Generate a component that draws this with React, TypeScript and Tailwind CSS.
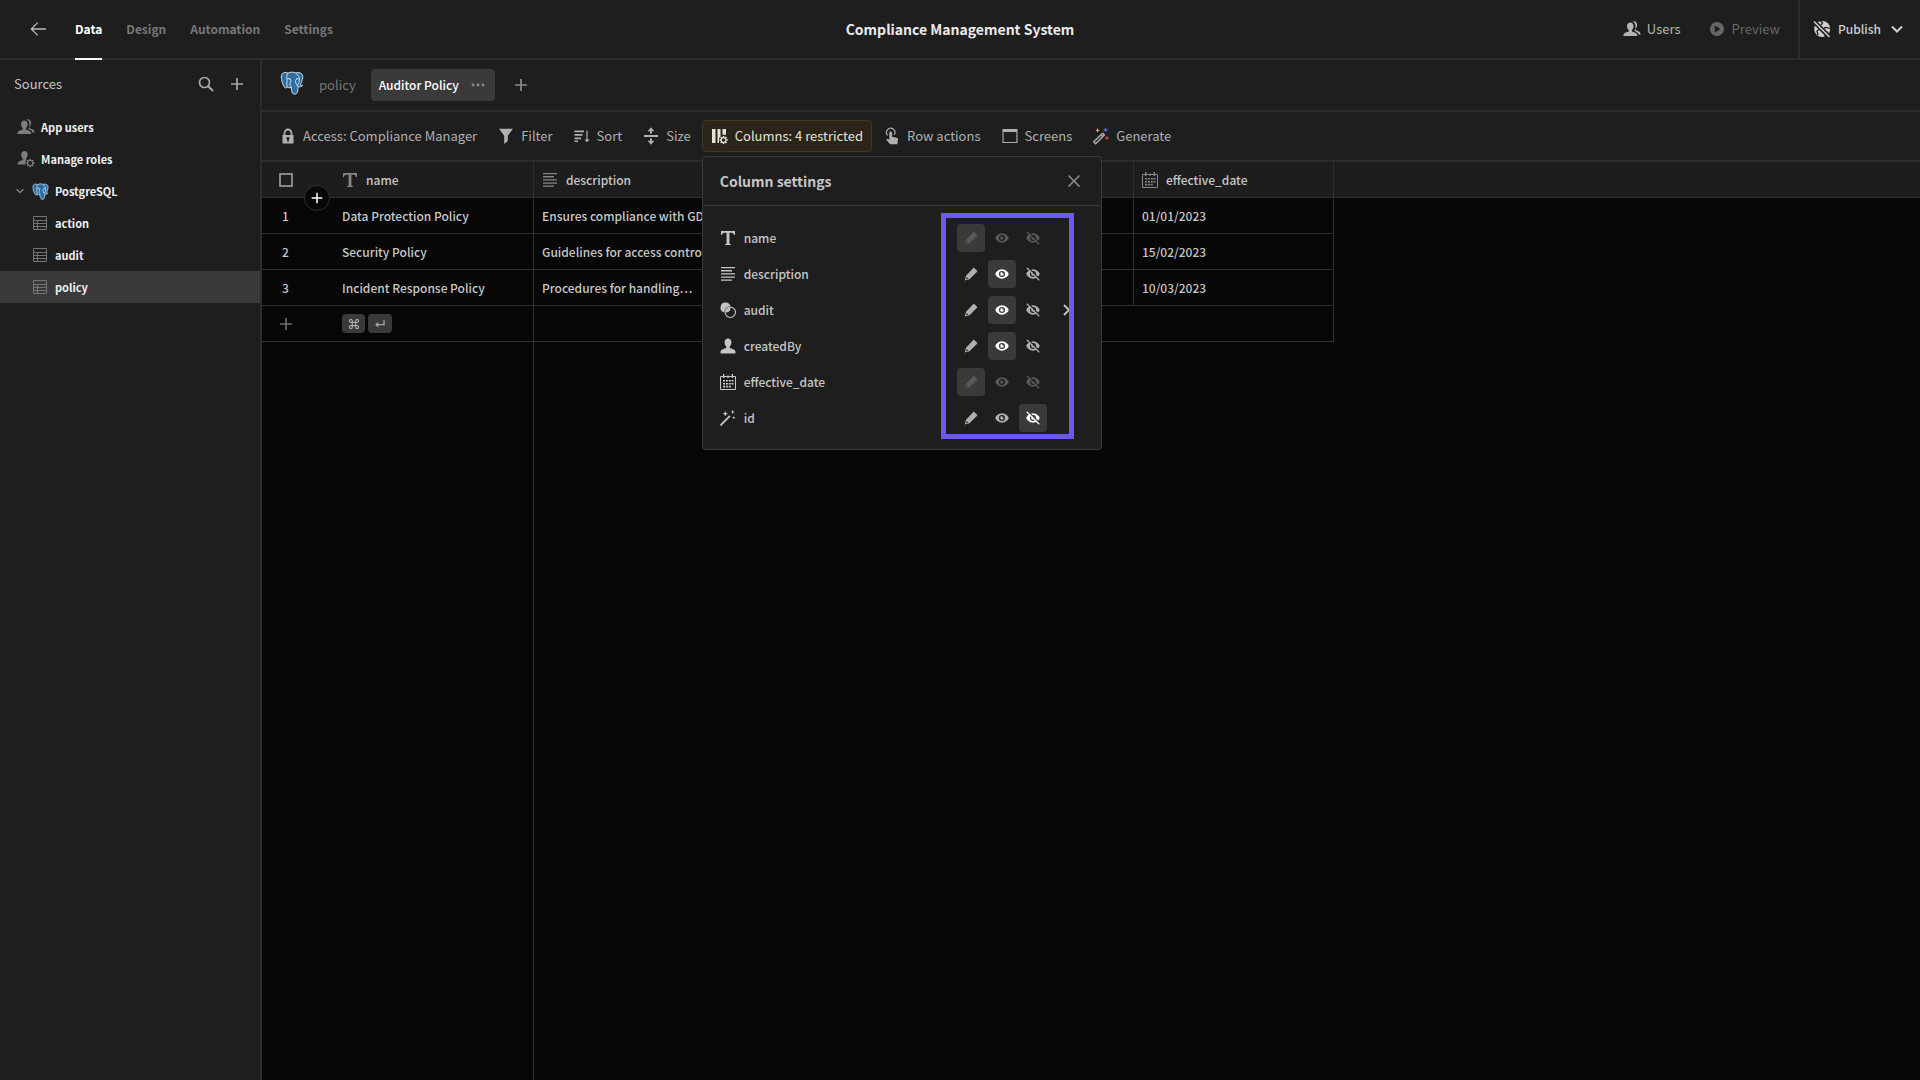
import React from "react";

type IconProps = { className?: string };

function Svg({ className = "size-[18px]", box = 18, children }: { className?: string; box?: number; children: React.ReactNode }) {
  return (
    <svg aria-hidden="true" viewBox={`0 0 ${box} ${box}`} fill="currentColor" className={`shrink-0 ${className}`}>
      {children}
    </svg>
  );
}

const Stroke = ({ d, w = 1.5 }: { d: string; w?: number }) => (
  <path d={d} fill="none" stroke="currentColor" strokeWidth={w} />
);

const ArrowLeft = (p: IconProps) => (
  <Svg {...p}><Stroke d="M17 9H2.300M8.700 2.600L2.300 9l6.400 6.400" w={1.3} /></Svg>
);
const Search = (p: IconProps) => (
  <Svg {...p}><circle cx="7.5" cy="7.5" r="5" fill="none" stroke="currentColor" strokeWidth="1.7" /><Stroke d="M11.2 11.2L16 16" w={2} /></Svg>
);
const Plus = (p: IconProps) => (
  <Svg {...p}><Stroke d="M9 3v12M3 9h12" w={1.7} /></Svg>
);
const UserShape = () => (
  <path d="M9 1.6c2 0 3.4 1.500 3.400 3.900 0 1.700-.7 3.200-1.600 4.100-.3.400-.2 1.500.4 1.700 2.700.8 5.300 1.600 5.300 3.900v1.300H1.500v-1.300c0-2.300 2.600-3.100 5.300-3.900.6-.2.700-1.300.4-1.700C6.300 8.700 5.600 7.200 5.600 5.500 5.600 3.100 7 1.600 9 1.600z" />
);
const User = (p: IconProps) => <Svg {...p}><UserShape /></Svg>;
const Users = (p: IconProps) => (
  <Svg {...p}>
    <path d="M7.300 2.400c1.900 0 3.300 1.400 3.300 3.700 0 1.600-.7 3-1.500 3.900-.4.400-.3 1.400.3 1.700 2.500.7 4.900 1.500 4.900 3.600V16H.4v-.7c0-2.100 2.400-2.900 4.900-3.600.6-.3.7-1.300.3-1.700C4.700 9.100 4 7.700 4 6.100c0-2.300 1.400-3.700 3.300-3.700z" />
    <path d="M10 1.500c2.200-.6 4.100.9 4.100 3.500 0 1.700-.6 2.900-1.400 3.700-.4.500-.3 1.300.3 1.600 2.300.9 4.500 1.500 4.500 3.500v.7h-2c-.4-1.900-2.200-2.800-4.300-3.500.8-1.300 1.300-2.800 1.300-4.600 0-2-.9-3.800-2.500-4.900z" />
  </Svg>
);
const Gear = ({ x, y, r }: { x: number; y: number; r: number }) => (
  <g transform={`translate(${x} ${y})`}>
    <circle r={r} fill="none" stroke="currentColor" strokeWidth="1.3" />
    {[0, 45, 90, 135, 180, 225, 270, 315].map((a) => (
      <path key={a} transform={`rotate(${a})`} d={`M-.7 ${-r - 1.7}h1.400v1.500h-1.400z`} />
    ))}
  </g>
);
const UserGear = (p: IconProps) => (
  <Svg {...p}>
    <path d="M7.500 1c1.900 0 3.200 1.400 3.200 3.600 0 1.500-.5 2.700-1.300 3.600-.4.400-.4 1.300.2 1.600-1.300 1.200-1.500 3-.8 4.700H.7v-.8c0-2 2.200-2.700 4.600-3.500.6-.2.7-1.400.3-1.800-.9-.9-1.400-2.200-1.400-3.700C4.200 2.500 5.600 1 7.500 1z" />
    <Gear x={13.2} y={13} r={2.6} />
  </Svg>
);
const ChevronDown = (p: IconProps) => <Svg {...p}><Stroke d="M4 6.500l5 5 5-5" w={2} /></Svg>;
const ChevronRight = (p: IconProps) => <Svg {...p}><Stroke d="M5 4l5 5-5 5" w={1.8} /></Svg>;
const Close = (p: IconProps) => <Svg {...p}><Stroke d="M3.500 3.500l11 11M14.500 3.500l-11 11" w={1.5} /></Svg>;
const TableIcon = (p: IconProps) => (
  <Svg {...p}>
    <path d="M2.500 2.500h13v13h-13zM2.500 6.500h13M2.500 9.500h13M2.500 12.500h13M6.500 6.500v9" fill="none" stroke="currentColor" strokeWidth="1" />
  </Svg>
);
const Play = (p: IconProps) => (
  <Svg {...p}><path fillRule="evenodd" d="M9 2a7 7 0 100 14A7 7 0 009 2zM6.800 5.400L12.600 9l-5.800 3.600z" /></Svg>
);
const GlobeStrike = (p: IconProps) => (
  <Svg {...p}>
    <mask id="globe-strike">
      <circle cx="9.200" cy="9" r="8" fill="white" />
      <path d="M7 0l2.500 3-1.500 2M17 8.500l-3.500-1-2.500.500M6 9.500L4 11l1 4M13 11l-1.500 3 1 3M3.500 4L2 2" fill="none" stroke="black" strokeWidth="1.300" />
      <path d="M-1 -.5L18 18.500" stroke="black" strokeWidth="4.600" />
    </mask>
    <rect width="18" height="18" mask="url(#globe-strike)" />
    <Stroke d="M1 1.500l15.500 15.500" w={1.6} />
  </Svg>
);
const Lock = (p: IconProps) => (
  <Svg {...p}>
    <path fillRule="evenodd" d="M3.500 8h11v8.500h-11zM9 10a1.500 1.500 0 00-.8 2.800v2h1.600v-2A1.500 1.500 0 009 10z" />
    <Stroke d="M5.500 8V6a3.500 3.500 0 017 0v2" w={1.8} />
  </Svg>
);
const Funnel = (p: IconProps) => <Svg {...p}><path d="M2 1.800h14L10.800 8.700v5.200L7.200 17V8.700z" /></Svg>;
const SortIcon = (p: IconProps) => (
  <Svg {...p}><path d="M1.500 3.500h9.500v1.700H1.500zM1.500 7h8v1.700h-8zM1.500 10.500H8v1.700H1.500zM1.500 13.500H5v1.500H1.500zM13.400 3.500h1.200v9h2L14 15.300l-2.600-2.800h2z" /></Svg>
);
const SizeIcon = (p: IconProps) => (
  <Svg {...p}><path d="M2 8.100h14v1.800H2zM9 .3l3.400 3.900H9.900v2.500H8.100V4.200H5.600zM9 17.700l3.400-3.900H9.900v-2.500H8.100v2.500H5.600z" /></Svg>
);
const ColumnsGear = (p: IconProps) => (
  <Svg {...p}>
    <path d="M1 2h3.500v14H1zM6.500 2h3v7.500l-1.500 2V16H6.500zM11.500 2h3.500v5.800h-3.500z" />
    <Gear x={12.6} y={13} r={2.4} />
  </Svg>
);
const Tap = (p: IconProps) => (
  <Svg {...p}>
    <path d="M7.200 4.500c1-.3 1.900.3 1.900 1.300v4l4.500.9c1 .2 1.500.9 1.400 1.800l-.6 4.700H7.100l-3.900-4.500c.8-1 1.900-.8 3.100.1V5.800c0-.7.300-1.100.9-1.300z" />
    <Stroke d="M4.600 8.400a4.200 4.200 0 116.500-.4" w={1.2} />
  </Svg>
);
const WindowIcon = (p: IconProps) => (
  <Svg {...p}><path fillRule="evenodd" d="M1.500 2h15v14h-15zM2.600 5v9.900h12.800V5z" /></Svg>
);
const WandColor = (p: IconProps) => (
  <Svg {...p}>
    <path d="M10.700 6.200l1.700 1.700-8.800 8.800-2-2zM9.300 8.200l1.200 1.200" fill="none" stroke="currentColor" strokeWidth="1.400" strokeLinejoin="round" />
    <path fill="#e8b13c" d="M5.600 1l.7 1.700 1.700.7-1.700.7-.7 1.700-.7-1.700-1.700-.7 1.700-.7z" />
    <path fill="#5f67e8" d="M13.600.2l.8 1.900 1.900.8-1.900.8-.8 1.900-.8-1.900-1.900-.8 1.900-.8z" />
    <path fill="#e5484d" d="M14.900 8.600l.7 1.800 1.800.7-1.800.7-.7 1.800-.7-1.800-1.800-.7 1.800-.7z" />
  </Svg>
);
const TextType = (p: IconProps) => (
  <Svg {...p}><path d="M2 2h14v4h-1.100c-.2-1.500-.7-2.200-2.200-2.200h-2.300v10.100c0 .8.500 1.200 1.700 1.300v.9H5.900v-.9c1.200-.1 1.700-.5 1.700-1.300V3.800H5.300C3.800 3.800 3.300 4.500 3.100 6H2z" /></Svg>
);
const TextLines = (p: IconProps) => (
  <Svg {...p}><path d="M2 2h14v1.300H2zM2 5.100h11v1.300H2zM2 8.300h14v1.300H2zM2 11.400h14v1.300H2zM2 14.500h11v1.300H2z" /></Svg>
);
const Relation = (p: IconProps) => (
  <Svg {...p}>
    <path d="M6.600 1.500a5.100 5.100 0 014.900 3.700 6 6 0 00-6.300 6.300A5.100 5.100 0 016.600 1.500z" />
    <path d="M11.600 6.800a5 5 0 01-4.800 4.800 5 5 0 014.800-4.800z" />
    <circle cx="11.300" cy="11.300" r="5.200" fill="none" stroke="currentColor" strokeWidth="1.100" />
  </Svg>
);
const Calendar = (p: IconProps) => (
  <Svg {...p}>
    <path d="M1.500 3.500h15v13h-15z" fill="none" stroke="currentColor" strokeWidth="1" />
    <path d="M4 1h1.400v4H4zM12.600 1H14v4h-1.400zM8.300 2.500h1.400V5H8.300z" />
    <path d="M4 7h2v1.600H4zM6.900 7h2v1.600h-2zM9.800 7h2v1.600h-2zM12.500 7h2v1.600h-2zM4 9.900h2v1.600H4zM6.900 9.900h2v1.600h-2zM9.800 9.900h2v1.600h-2zM12.500 9.900h2v1.600h-2zM4 12.800h2v1.600H4zM6.900 12.800h2v1.600h-2zM9.800 12.800h2v1.600h-2z" />
  </Svg>
);
const Wand = (p: IconProps) => (
  <Svg {...p}>
    <path d="M10.300 6.300l1.300 1.300-9.500 9.500L.8 15.800zM6.300 2l.8 2 2 .8-2 .8-.8 2-.8-2-2-.8 2-.8zM13.700.8l.6 1.600 1.600.6-1.600.6-.6 1.600-.6-1.600-1.600-.6 1.600-.6zM14.800 7l.5 1.300 1.300.5-1.300.5-.5 1.300-.5-1.300-1.300-.5 1.300-.5z" />
  </Svg>
);
const Pencil = (p: IconProps) => (
  <Svg {...p}><path fillRule="evenodd" d="M13.200 1.200l3.600 3.600c.4.400.4.800 0 1.200l-9.700 9.700-6.200 1.800 1.700-6.200L12 1.200c.4-.4.800-.4 1.200 0zM3.500 12.800l-.8 2.900 2.900-.9z" /></Svg>
);
const eyePath = "M9 3C4.800 3 .5 7 .5 9S4.800 15 9 15s8.500-4 8.500-6S13.200 3 9 3zm0 9.900a3.900 3.900 0 110-7.800 3.900 3.900 0 010 7.800z";
const pupilPath = "M9.500 6.700a1.300 1.300 0 001.700 1.700A2.300 2.300 0 119.500 6.700z";
const Eye = (p: IconProps) => (
  <Svg {...p}><path fillRule="evenodd" d={eyePath} /><path d={pupilPath} /></Svg>
);
const EyeOff = (p: IconProps) => (
  <Svg {...p}>
    <mask id="eye-strike"><rect width="18" height="18" fill="white" /><path d="M2.800.8L18 16" stroke="black" strokeWidth="1.800" /></mask>
    <g mask="url(#eye-strike)"><path fillRule="evenodd" d={eyePath} /><path d={pupilPath} /></g>
    <Stroke d="M1 1l16 16" w={1.5} />
  </Svg>
);
const Enter = (p: IconProps) => (
  <Svg {...p}><path d="M14 3.500h2V11H6.500v3.300L1.800 10l4.700-4.300V9H14z" /></Svg>
);
const Command = (p: IconProps) => (
  <Svg {...p}><path d="M6.500 6.500h5v5h-5zM6.500 6.500V4.300a2.200 2.200 0 10-2.200 2.200zM11.500 6.500V4.300a2.200 2.200 0 112.200 2.200zM6.500 11.500v2.200a2.200 2.200 0 11-2.200-2.200zM11.500 11.500v2.200a2.200 2.200 0 102.200-2.200z" fill="none" stroke="currentColor" strokeWidth="1.800" /></Svg>
);
const Postgres = ({ className = "size-6" }: IconProps) => (
  <Svg className={className} box={24}>
    <path fill="#2f6f9f" stroke="#dbe7ee" strokeWidth=".9" strokeLinejoin="round" d="M8 2.200C5.500.8 1.200 1 1.300 6c.1 3.200 1.500 8.400 3.300 10.400 1 1 1.900.4 2.600-.4 1 .9 2.800.9 4.100.3.200 2.700.2 6.400 2.700 6.800 2.400.3 3.400-1.100 3.700-3.200l.5-4.300c1.700.4 3.500 0 4.500-1.200-.8-.2-2 0-2.700-.4 2.200-3 3.600-8.700 2.200-10.500-1.800-2.300-4.500-2.200-6.500-1.500C13.600.8 10.400.9 8 2.200z" />
    <path fill="none" stroke="#dbe7ee" strokeWidth=".9" strokeLinecap="round" d="M8 2.200c-1.700 2.200-1.400 4.400-1 7 .3 2.400-.7 4.300.2 6.800M7.400 8c1.200-.9 3-.8 3.300.4.500 2-.6 3.200-.8 4.800-.1 1.400.9 2 1.400 3.100M15.700 2c2.400 1.600 3.700 4.200 3.600 5.800-.1 2.400.2 4.600-2.300 6.400-.4-1.500-1.500-2.100-1.500-3.700 0-1.500.6-2.600 2-2.800.7-.1 1.300 0 1.700.4M18.200 15.600l-1-1.300" />
    <path fill="#fff" d="M8.700 7.800h1.200v.8H8.700zM16.300 7.500h1.200v.8h-1.200z" />
  </Svg>
);

const navItems = ["Data", "Design", "Automation", "Settings"];
const tables = ["action", "audit", "policy"];

const rows = [
  ["Data Protection Policy", "Ensures compliance with GDPR…", "01/01/2023"],
  ["Security Policy", "Guidelines for access control…", "15/02/2023"],
  ["Incident Response Policy", "Procedures for handling…", "10/03/2023"],
];

type Access = "write" | "read" | "hidden";
const columns: { name: string; icon: React.FC<IconProps>; access: Access; locked?: boolean; nested?: boolean }[] = [
  { name: "name", icon: TextType, access: "write", locked: true },
  { name: "description", icon: TextLines, access: "read" },
  { name: "audit", icon: Relation, access: "read", nested: true },
  { name: "createdBy", icon: User, access: "read" },
  { name: "effective_date", icon: Calendar, access: "write", locked: true },
  { name: "id", icon: Wand, access: "hidden" },
];
const accessOptions: { value: Access; label: string; icon: React.FC<IconProps> }[] = [
  { value: "write", label: "Writable", icon: Pencil },
  { value: "read", label: "Read-only", icon: Eye },
  { value: "hidden", label: "Hidden", icon: EyeOff },
];

function TopBar() {
  return (
    <header className="grid h-[60px] shrink-0 grid-cols-[1fr_auto_1fr] border-b-2 border-[#2c2c2c] bg-[#1e1e1e]">
      <div className="flex items-center pl-[29px]">
        <button aria-label="Back" className="mr-7 text-[#b8b8b8]"><ArrowLeft /></button>
        <nav className="flex h-full gap-6">
          {navItems.map((item, i) => (
            <a
              key={item}
              href={`#${item.toLowerCase()}`}
              className={`-mb-0.5 flex h-[60px] items-center border-b-2 text-xs font-bold ${i === 0 ? "border-white text-white" : "border-transparent text-[#777777]"}`}
            >
              {item}
            </a>
          ))}
        </nav>
      </div>
      <h1 className="self-center text-sm leading-5 font-bold text-[#ebebeb]">Compliance Management System</h1>
      <div className="flex items-center justify-end">
        <button className="flex items-center gap-1.5 text-[#b4b4b4]"><Users />Users</button>
        <button className="mr-[18px] ml-[27px] flex items-center gap-1.5 text-[#666666]"><Play />Preview</button>
        <div className="flex h-full items-center border-l-2 border-[#2c2c2c] pr-3.5 pl-[13px]">
          <button className="flex items-center gap-[7px] text-xs font-medium text-[#cfcfcf]">
            <GlobeStrike />Publish<ChevronDown />
          </button>
        </div>
      </div>
    </header>
  );
}

function Sidebar() {
  return (
    <aside className="w-[262px] shrink-0 border-r-2 border-[#2c2c2c] bg-[#1e1e1e]">
      <div className="flex h-[51px] items-center pr-3.5 pb-1 pl-3.5 text-[#c4c4c4]">
        <h2 className="flex-1">Sources</h2>
        <button aria-label="Search sources" className="mr-[13px] text-[#a8a8a8]"><Search /></button>
        <button aria-label="Add source" className="text-[#a8a8a8]"><Plus /></button>
      </div>
      <ul className="text-[11px] font-bold text-[#f0f0f0]">
        <li><a href="#users" className="flex h-8 items-center gap-1.5 pl-[17px]"><Users className="size-[18px] text-[#7d7d7d]" />App users</a></li>
        <li><a href="#roles" className="flex h-8 items-center gap-1.5 pl-[17px]"><UserGear className="size-[18px] text-[#7d7d7d]" />Manage roles</a></li>
        <li>
          <a href="#postgresql" className="flex h-8 items-center pl-3.5">
            <ChevronDown className="mr-1.5 size-3 text-[#8a8a8a]" />
            <Postgres className="mr-1.5 size-[17px]" />
            PostgreSQL
          </a>
        </li>
        {tables.map((t) => (
          <li key={t}>
            <a href={`#${t}`} className={`flex h-8 items-center gap-1.5 pl-[31px] ${t === "policy" ? "bg-[#3a3a3a]" : ""}`}>
              <TableIcon className="size-[18px] text-[#747474]" />{t}
            </a>
          </li>
        ))}
      </ul>
    </aside>
  );
}

function ViewTabs() {
  return (
    <div className="flex h-[52px] shrink-0 items-center border-b-2 border-[#2c2c2c] bg-[#1e1e1e] pl-[18px]">
      <Postgres className="mb-1 size-6" />
      <button className="ml-[15px] text-[#777777]">policy</button>
      <div className="ml-[15px] flex h-8 items-center gap-2.5 rounded bg-[#3a3a3a] px-2">
        <button className="text-xs leading-5 font-medium text-white">Auditor Policy</button>
        <button aria-label="View options" className="text-[#8a8a8a]">
          <Svg><circle cx="4" cy="9" r="1.400" /><circle cx="9" cy="9" r="1.400" /><circle cx="14" cy="9" r="1.400" /></Svg>
        </button>
      </div>
      <button aria-label="Create view" className="ml-[17px] text-[#8a8a8a]"><Plus /></button>
    </div>
  );
}

function ToolButton({ icon: Icon, label, active }: { icon: React.FC<IconProps>; label: string; active?: boolean }) {
  return (
    <button
      aria-expanded={active}
      className={`flex h-8 items-center gap-1.5 rounded border px-2 whitespace-nowrap ${active ? "border-[#40361c] bg-[#2a2419] text-[#e6e2da]" : "border-transparent text-[#b0b0b0]"}`}
    >
      <Icon />{label}
    </button>
  );
}

function ColumnSettings() {
  return (
    <section aria-label="Column settings" className="absolute top-9 left-0 z-10 w-[400px] rounded border border-[#3a3a3a] bg-[#1e1e1e] text-xs text-[#c6c6c6]">
      <div className="flex h-[49px] items-center justify-between border-b border-[#3a3a3a] pr-[18px] pl-[17px]">
        <h2 className="text-sm leading-5 font-bold">Column settings</h2>
        <button aria-label="Close" className="text-[#8f8f8f]"><Close /></button>
      </div>
      <ul className="pt-3.5 pb-[13px]">
        {columns.map(({ name, icon: Icon, access, locked, nested }) => (
          <li key={name} className="flex h-9 items-center pl-4">
            <Icon />
            <span className="ml-[7px] flex-1 font-medium">{name}</span>
            <div role="group" aria-label={`${name} access`} className="flex gap-[3px]">
              {accessOptions.map(({ value, label, icon: Option }) => (
                <button
                  key={value}
                  aria-label={label}
                  aria-pressed={value === access}
                  disabled={locked}
                  className={`flex size-7 items-center justify-center rounded ${value === access ? "bg-[#3a3a3a]" : ""} ${locked ? "text-[#585858]" : value === access ? "text-white" : "text-[#b0b0b0]"}`}
                >
                  <Option className="size-3.5" />
                </button>
              ))}
            </div>
            <div className="flex w-[54px] pl-3">
              {nested && <button aria-label={`${name} columns`}><ChevronRight /></button>}
            </div>
          </li>
        ))}
      </ul>
      <div className="pointer-events-none absolute top-14 right-[27px] bottom-2.5 w-[133px] border-[5px] border-[#6a5af0]" />
    </section>
  );
}

function Toolbar() {
  return (
    <div className="flex h-[50px] shrink-0 items-center gap-0.5 border-b-2 border-[#2c2c2c] bg-[#1e1e1e] pl-2">
      <ToolButton icon={Lock} label="Access: Compliance Manager" />
      <ToolButton icon={Funnel} label="Filter" />
      <ToolButton icon={SortIcon} label="Sort" />
      <ToolButton icon={SizeIcon} label="Size" />
      <div className="relative">
        <ToolButton icon={ColumnsGear} label="Columns: 4 restricted" active />
        <ColumnSettings />
      </div>
      <ToolButton icon={Tap} label="Row actions" />
      <ToolButton icon={WindowIcon} label="Screens" />
      <ToolButton icon={WandColor} label="Generate" />
    </div>
  );
}

function HeadCell({ icon: Icon, label }: { icon: React.FC<IconProps>; label: string }) {
  return (
    <th scope="col" className="border-r border-b border-[#2f2f2f] px-[7px] text-left font-medium">
      <span className="flex items-center gap-[7px]"><Icon className="size-[18px] text-[#868686]" />{label}</span>
    </th>
  );
}

function Grid() {
  const cell = "overflow-hidden border-b border-[#2f2f2f] px-2 text-ellipsis whitespace-nowrap";
  return (
    <div className="flex flex-1 flex-col bg-[#070707]">
      <table className="w-full table-fixed border-separate border-spacing-0 text-xs leading-5 text-[#c6c6c6]">
        <colgroup>
          <col className="w-[72px]" />
          <col className="w-[200px]" />
          <col className="w-[200px]" />
          <col className="w-[200px]" />
          <col className="w-[200px]" />
          <col className="w-[200px]" />
          <col />
        </colgroup>
        <thead className="bg-[#1d1d1d]">
          <tr className="h-9">
            <th className="relative border-b border-[#2f2f2f] p-0">
              <input type="checkbox" aria-label="Select all rows" className="ml-[17px] block size-3.5 appearance-none border-2 border-[#868686]" />
              <button aria-label="Add row" className="absolute top-[23px] right-1 flex size-[26px] items-center justify-center rounded-full border border-[#2f2f2f] bg-[#070707] text-white">
                <Plus className="size-4" />
              </button>
            </th>
            <HeadCell icon={TextType} label="name" />
            <HeadCell icon={TextLines} label="description" />
            <HeadCell icon={Relation} label="audit" />
            <HeadCell icon={User} label="createdBy" />
            <HeadCell icon={Calendar} label="effective_date" />
            <td className="border-b border-[#2f2f2f]" />
          </tr>
        </thead>
        <tbody className="font-medium">
          {rows.map(([name, description, date], i) => (
            <tr key={name} className="h-9">
              <td className="border-b border-[#2f2f2f] p-0"><span className="block w-[47px] text-center">{i + 1}</span></td>
              <td className={`${cell} border-r`}>{name}</td>
              <td className={`${cell} border-r`}>{description}</td>
              <td className={`${cell} border-r`} />
              <td className={`${cell} border-r`} />
              <td className={`${cell} border-r`}>{date}</td>
              <td />
            </tr>
          ))}
          <tr className="h-9">
            <td className="border-b border-[#2f2f2f] p-0">
              <button aria-label="New row" className="ml-[15px] block text-[#6e6e6e]"><Plus /></button>
            </td>
            <td className={`${cell} border-r`}>
              <span className="flex gap-[3px] text-[#a8a8a8]">
                <kbd className="flex h-[19px] w-[23px] items-center justify-center rounded bg-[#3a3a3a]"><Command className="size-3" /></kbd>
                <kbd className="flex h-[19px] w-6 items-center justify-center rounded bg-[#3a3a3a]"><Enter className="size-3" /></kbd>
              </span>
            </td>
            <td colSpan={4} className={`${cell} border-r`} />
            <td />
          </tr>
        </tbody>
      </table>
      <div className="w-[272px] flex-1 border-r border-[#2f2f2f]" />
    </div>
  );
}

export default function App() {
  return (
    <div className="flex min-h-screen flex-col bg-[#070707] font-['Noto_Sans_CJK_SC','Source_Sans_Pro',sans-serif] text-[13px] leading-5">
      <TopBar />
      <div className="flex flex-1">
        <Sidebar />
        <main className="flex min-w-0 flex-1 flex-col">
          <ViewTabs />
          <Toolbar />
          <Grid />
        </main>
      </div>
    </div>
  );
}
